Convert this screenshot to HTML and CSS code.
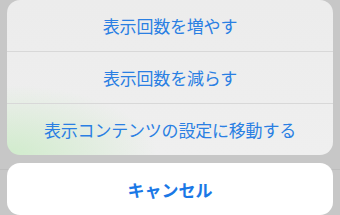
FILE: index.html
```html
<!DOCTYPE html>
<html lang="ja">
<head>
<meta charset="utf-8">
<link rel="stylesheet" href="styles.css">
</head>
<body>
<div class="sheet">
  <div class="group">
    <div class="action">表示回数を増やす</div>
    <div class="action">表示回数を減らす</div>
    <div class="action">表示コンテンツの設定に移動する</div>
  </div>
  <div class="cancel">キャンセル</div>
</div>
</body>
</html>
```
FILE: styles.css
```css
html, body {
  margin: 0;
  padding: 0;
}
body {
  width: 340px;
  height: 215px;
  overflow: hidden;
  background:
    linear-gradient(to bottom, transparent 169px, #bdbdbd 169px, #bdbdbd 170px, transparent 170px),
    #c7c7c7;
  font-family: "Noto Sans CJK JP", "Noto Sans", sans-serif;
}
.sheet {
  display: flex;
  flex-direction: column;
  gap: 8px;
  padding: 0 7px;
}
.group {
  border-radius: 13px;
  overflow: hidden;
  background:
    radial-gradient(ellipse 150px 70px at 0% 100%, rgba(205, 235, 200, 0.9), rgba(205, 235, 200, 0) 100%),
    linear-gradient(to bottom, #ececec, #efefef);
  display: flex;
  flex-direction: column;
}
.action {
  height: 51px;
  display: flex;
  align-items: center;
  justify-content: center;
  font-size: 17px;
  color: #2a7fe3;
  letter-spacing: -0.2px;
}
.action + .action {
  border-top: 1px solid #d8d8d8;
}
.cancel {
  height: 52px;
  border-radius: 13px;
  background: #ffffff;
  display: flex;
  align-items: center;
  justify-content: center;
  font-size: 17px;
  font-weight: 700;
  color: #1a78e6;
}
```
